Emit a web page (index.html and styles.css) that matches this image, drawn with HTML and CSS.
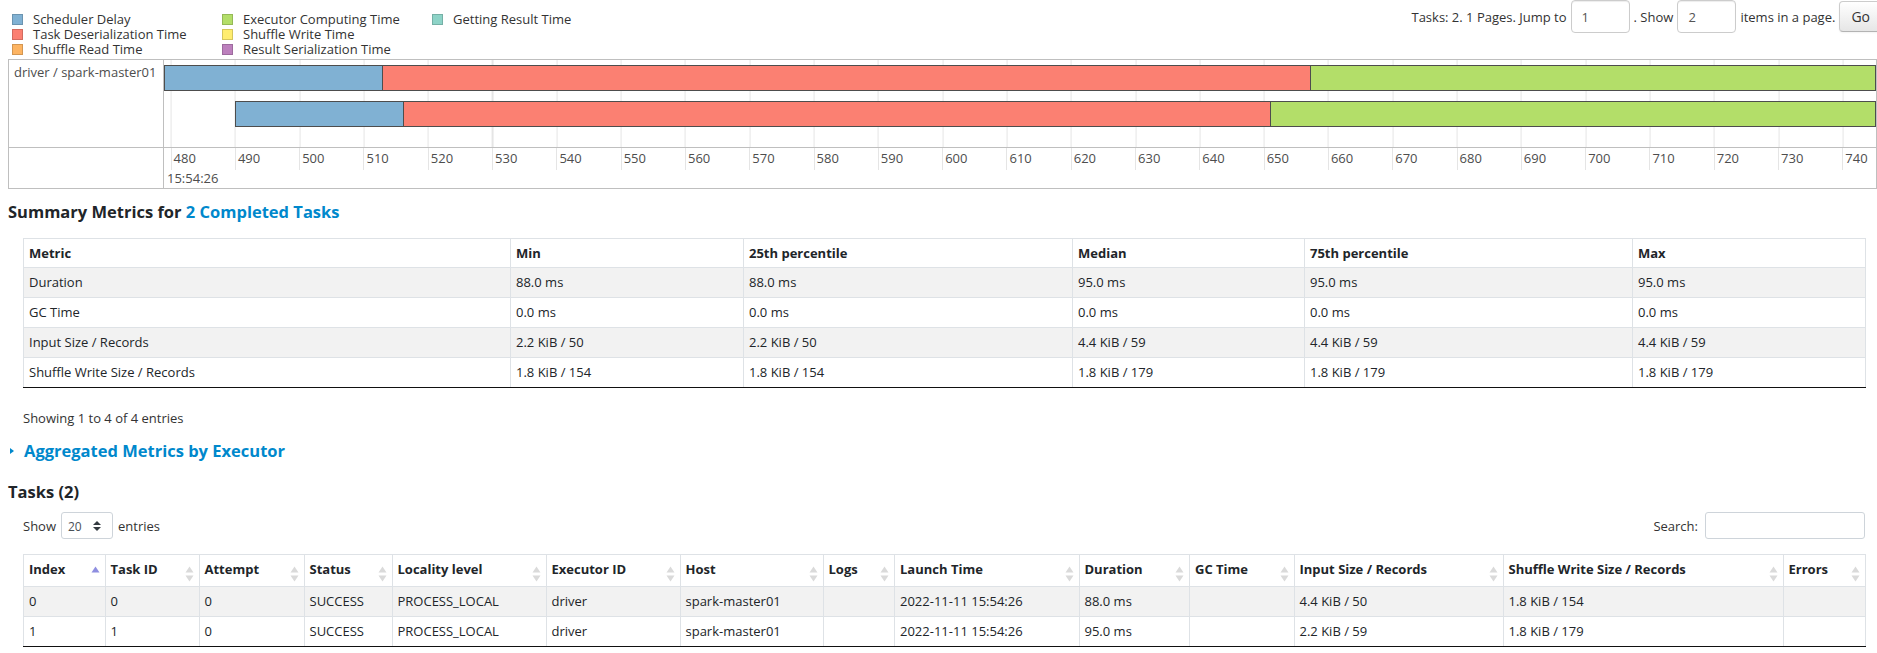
FILE: index.html
```html
<!DOCTYPE html>
<html>
<head>
<meta charset="utf-8">
<title>Stage</title>
<link rel="stylesheet" href="styles.css">
</head>
<body>
<div class="top">
  <div class="legend">
    <div class="lg"><span class="sw c-sched"></span>Scheduler Delay</div>
    <div class="lg"><span class="sw c-deser"></span>Task Deserialization Time</div>
    <div class="lg"><span class="sw c-sread"></span>Shuffle Read Time</div>
    <div class="lg"><span class="sw c-exec"></span>Executor Computing Time</div>
    <div class="lg"><span class="sw c-swrite"></span>Shuffle Write Time</div>
    <div class="lg"><span class="sw c-ser"></span>Result Serialization Time</div>
    <div class="lg"><span class="sw c-result"></span>Getting Result Time</div>
  </div>
  <form class="pager">
    <span>Tasks: 2. 1 Pages. Jump to</span>
    <input class="pg-input" type="text" value="1">
    <span>. Show</span>
    <input class="pg-input" type="text" value="2">
    <span>items in a page.</span>
    <button type="button" class="go">Go</button>
  </form>
</div>

<div class="timeline">
  <div class="tl-label">driver / spark-master01</div>
  <div class="tl-items">
    <div class="bar">
      <div class="seg c-sched" style="width:219px"></div>
      <div class="seg c-deser" style="width:929px"></div>
      <div class="seg c-exec grow"></div>
    </div>
    <div class="bar" style="margin-left:71px">
      <div class="seg c-sched" style="width:169px"></div>
      <div class="seg c-deser" style="width:868px"></div>
      <div class="seg c-exec grow"></div>
    </div>
  </div>
  <div class="tl-label-axis"></div>
  <div class="tl-axis">
    <div class="ticks">
      <div class="tick">480</div><div class="tick">490</div><div class="tick">500</div><div class="tick">510</div>
      <div class="tick">520</div><div class="tick">530</div><div class="tick">540</div><div class="tick">550</div>
      <div class="tick">560</div><div class="tick">570</div><div class="tick">580</div><div class="tick">590</div>
      <div class="tick">600</div><div class="tick">610</div><div class="tick">620</div><div class="tick">630</div>
      <div class="tick">640</div><div class="tick">650</div><div class="tick">660</div><div class="tick">670</div>
      <div class="tick">680</div><div class="tick">690</div><div class="tick">700</div><div class="tick">710</div>
      <div class="tick">720</div><div class="tick">730</div><div class="tick">740</div>
    </div>
    <div class="major">15:54:26</div>
  </div>
</div>

<h4 class="heading summary-head">Summary Metrics for <a class="link" href="#">2 Completed Tasks</a></h4>

<div class="section">
  <table class="tbl summary">
    <colgroup>
      <col style="width:487px"><col style="width:233px"><col style="width:329px">
      <col style="width:232px"><col style="width:328px"><col style="width:233px">
    </colgroup>
    <thead>
      <tr><th>Metric</th><th>Min</th><th>25th percentile</th><th>Median</th><th>75th percentile</th><th>Max</th></tr>
    </thead>
    <tbody>
      <tr class="odd"><td>Duration</td><td>88.0 ms</td><td>88.0 ms</td><td>95.0 ms</td><td>95.0 ms</td><td>95.0 ms</td></tr>
      <tr><td>GC Time</td><td>0.0 ms</td><td>0.0 ms</td><td>0.0 ms</td><td>0.0 ms</td><td>0.0 ms</td></tr>
      <tr class="odd"><td>Input Size / Records</td><td>2.2 KiB / 50</td><td>2.2 KiB / 50</td><td>4.4 KiB / 59</td><td>4.4 KiB / 59</td><td>4.4 KiB / 59</td></tr>
      <tr><td>Shuffle Write Size / Records</td><td>1.8 KiB / 154</td><td>1.8 KiB / 154</td><td>1.8 KiB / 179</td><td>1.8 KiB / 179</td><td>1.8 KiB / 179</td></tr>
    </tbody>
  </table>
  <div class="info">Showing 1 to 4 of 4 entries</div>
</div>

<h4 class="heading agg"><span class="arrow"></span><a class="link" href="#">Aggregated Metrics by Executor</a></h4>

<h4 class="heading tasks-head">Tasks (2)</h4>

<div class="section">
  <div class="dt-controls">
    <div class="dt-length">Show
      <div class="select"><span>20</span>
        <svg class="sel-arrow" width="8" height="10" viewBox="0 0 4 5"><path d="M2 0L0 2h4zm0 5L0 3h4z" fill="#343a40"/></svg>
      </div>
      entries</div>
    <div class="dt-search">Search: <input class="search" type="text"></div>
  </div>

  <table class="tbl tasks">
    <colgroup>
      <col style="width:81.5px"><col style="width:94px"><col style="width:105px"><col style="width:88px">
      <col style="width:154px"><col style="width:134px"><col style="width:143px"><col style="width:71.5px">
      <col style="width:184.5px"><col style="width:110.5px"><col style="width:104.5px"><col style="width:209px">
      <col style="width:280px"><col style="width:82px">
    </colgroup>
    <thead>
      <tr>
        <th><div class="th"><span>Index</span><svg class="sort" width="9" height="16" viewBox="0 0 9 16"><path d="M0.5 6.5L4.5 0.5L8.5 6.5Z" fill="#8e8ee0"/></svg></div></th>
        <th><div class="th"><span>Task ID</span><svg class="sort" width="9" height="16" viewBox="0 0 9 16"><path d="M0.5 6.5L4.5 0.5L8.5 6.5ZM0.5 9.5L8.5 9.5L4.5 15.5Z" fill="#dadada"/></svg></div></th>
        <th><div class="th"><span>Attempt</span><svg class="sort" width="9" height="16" viewBox="0 0 9 16"><path d="M0.5 6.5L4.5 0.5L8.5 6.5ZM0.5 9.5L8.5 9.5L4.5 15.5Z" fill="#dadada"/></svg></div></th>
        <th><div class="th"><span>Status</span><svg class="sort" width="9" height="16" viewBox="0 0 9 16"><path d="M0.5 6.5L4.5 0.5L8.5 6.5ZM0.5 9.5L8.5 9.5L4.5 15.5Z" fill="#dadada"/></svg></div></th>
        <th><div class="th"><span>Locality level</span><svg class="sort" width="9" height="16" viewBox="0 0 9 16"><path d="M0.5 6.5L4.5 0.5L8.5 6.5ZM0.5 9.5L8.5 9.5L4.5 15.5Z" fill="#dadada"/></svg></div></th>
        <th><div class="th"><span>Executor ID</span><svg class="sort" width="9" height="16" viewBox="0 0 9 16"><path d="M0.5 6.5L4.5 0.5L8.5 6.5ZM0.5 9.5L8.5 9.5L4.5 15.5Z" fill="#dadada"/></svg></div></th>
        <th><div class="th"><span>Host</span><svg class="sort" width="9" height="16" viewBox="0 0 9 16"><path d="M0.5 6.5L4.5 0.5L8.5 6.5ZM0.5 9.5L8.5 9.5L4.5 15.5Z" fill="#dadada"/></svg></div></th>
        <th><div class="th"><span>Logs</span><svg class="sort" width="9" height="16" viewBox="0 0 9 16"><path d="M0.5 6.5L4.5 0.5L8.5 6.5ZM0.5 9.5L8.5 9.5L4.5 15.5Z" fill="#dadada"/></svg></div></th>
        <th><div class="th"><span>Launch Time</span><svg class="sort" width="9" height="16" viewBox="0 0 9 16"><path d="M0.5 6.5L4.5 0.5L8.5 6.5ZM0.5 9.5L8.5 9.5L4.5 15.5Z" fill="#dadada"/></svg></div></th>
        <th><div class="th"><span>Duration</span><svg class="sort" width="9" height="16" viewBox="0 0 9 16"><path d="M0.5 6.5L4.5 0.5L8.5 6.5ZM0.5 9.5L8.5 9.5L4.5 15.5Z" fill="#dadada"/></svg></div></th>
        <th><div class="th"><span>GC Time</span><svg class="sort" width="9" height="16" viewBox="0 0 9 16"><path d="M0.5 6.5L4.5 0.5L8.5 6.5ZM0.5 9.5L8.5 9.5L4.5 15.5Z" fill="#dadada"/></svg></div></th>
        <th><div class="th"><span>Input Size / Records</span><svg class="sort" width="9" height="16" viewBox="0 0 9 16"><path d="M0.5 6.5L4.5 0.5L8.5 6.5ZM0.5 9.5L8.5 9.5L4.5 15.5Z" fill="#dadada"/></svg></div></th>
        <th><div class="th"><span>Shuffle Write Size / Records</span><svg class="sort" width="9" height="16" viewBox="0 0 9 16"><path d="M0.5 6.5L4.5 0.5L8.5 6.5ZM0.5 9.5L8.5 9.5L4.5 15.5Z" fill="#dadada"/></svg></div></th>
        <th><div class="th"><span>Errors</span><svg class="sort" width="9" height="16" viewBox="0 0 9 16"><path d="M0.5 6.5L4.5 0.5L8.5 6.5ZM0.5 9.5L8.5 9.5L4.5 15.5Z" fill="#dadada"/></svg></div></th>
      </tr>
    </thead>
    <tbody>
      <tr class="odd"><td>0</td><td>0</td><td>0</td><td>SUCCESS</td><td>PROCESS_LOCAL</td><td>driver</td><td>spark-master01</td><td></td><td>2022-11-11 15:54:26</td><td>88.0 ms</td><td></td><td>4.4 KiB / 50</td><td>1.8 KiB / 154</td><td></td></tr>
      <tr><td>1</td><td>1</td><td>0</td><td>SUCCESS</td><td>PROCESS_LOCAL</td><td>driver</td><td>spark-master01</td><td></td><td>2022-11-11 15:54:26</td><td>95.0 ms</td><td></td><td>2.2 KiB / 59</td><td>1.8 KiB / 179</td><td></td></tr>
    </tbody>
  </table>
</div>
</body>
</html>
```
FILE: styles.css
```css
* { box-sizing: border-box; }
html, body { margin: 0; padding: 0; overflow-x: hidden; }
body {
  font-family: "Open Sans", "Noto Sans", sans-serif;
  font-size: 13px;
  color: #212529;
  background: #fff;
}

/* ---------- top: legend + pager ---------- */
.top {
  display: flex;
  justify-content: space-between;
  align-items: flex-start;
  height: 59px;
}
.legend {
  display: grid;
  grid-template-rows: repeat(3, 15px);
  grid-auto-flow: column;
  grid-auto-columns: 210px;
  margin: 12px 0 0 12px;
  line-height: 15px;
  color: #333;
}
.lg { display: flex; align-items: center; white-space: nowrap; }
.sw { width: 11px; height: 11px; border: 1px solid; margin-right: 10px; flex: none; }

.c-sched  { background: #80b1d3; border-color: #6b94b0; }
.c-deser  { background: #fb8072; border-color: #d26b5f; }
.c-sread  { background: #fdb462; border-color: #d39651; }
.c-exec   { background: #b3de69; border-color: #95b957; }
.c-swrite { background: #ffed6f; border-color: #d5c65c; }
.c-ser    { background: #bc80bd; border-color: #9d6b9e; }
.c-result { background: #8dd3c7; border-color: #75b0a6; }

.pager {
  display: flex;
  align-items: center;
  gap: 4px;
  height: 33px;
  margin: 0 -5px 0 0;
  color: #333;
  white-space: nowrap;
}
.pg-input {
  width: 59px;
  height: 33px;
  border: 1px solid #ccc;
  border-radius: 4px;
  padding: 0 10px;
  font: inherit;
  font-size: 13px;
  color: #555;
  box-shadow: inset 0 1px 1px rgba(0,0,0,.075);
  outline: none;
}
.go {
  height: 31px;
  padding: 0 11px;
  font: inherit;
  font-size: 14px;
  color: #333;
  border: 1px solid #ccc;
  border-bottom-color: #b3b3b3;
  border-radius: 4px;
  background: linear-gradient(#fff, #e6e6e6);
  box-shadow: inset 0 1px 0 rgba(255,255,255,.2), 0 1px 2px rgba(0,0,0,.05);
}

/* ---------- timeline ---------- */
.timeline {
  margin-left: 8px;
  border: 1px solid #bfbfbf;
  display: grid;
  grid-template-columns: 155px 1fr;
  grid-template-rows: 88px 40px;
  color: #4d4d4d;
}
.tl-label {
  border-right: 1px solid #bfbfbf;
  border-bottom: 1px solid #bfbfbf;
  padding: 3px 5px;
  line-height: 18px;
  white-space: nowrap;
}
.tl-label-axis { border-right: 1px solid #bfbfbf; }
.tl-items {
  border-bottom: 1px solid #bfbfbf;
  overflow: hidden;
  padding-top: 5px;
  display: flex;
  flex-direction: column;
  gap: 10px;
  background-image: repeating-linear-gradient(to right, #e5e5e5 0 1px, transparent 1px 64.3px);
  background-position: 6.6px 0;
}
.bar { display: flex; height: 26px; }
.seg { border: 1px solid; flex: none; height: 26px; }
.seg + .seg { margin-left: -1px; }
.seg.grow { flex: 1; }

.tl-axis { overflow: hidden; }
.ticks { display: flex; padding-left: 6.6px; }
.tick {
  flex: none;
  width: 64.3px;
  height: 22px;
  border-left: 1px solid #e5e5e5;
  padding-left: 2px;
  line-height: 20px;
}
.major { padding-left: 3px; line-height: 20px; margin-top: -2px; }

/* ---------- headings ---------- */
.heading {
  margin: 0 0 0 8px;
  font-size: 16.5px;
  font-weight: 700;
  line-height: 24px;
  color: #212529;
}
.link { color: #0088cc; text-decoration: none; }
.summary-head { margin-top: 11px; }
.agg { margin-top: 11px; display: flex; align-items: center; }
.arrow {
  width: 0; height: 0;
  margin: 0 10px 0 2px;
  border-left: 4px solid #0088cc;
  border-top: 3.5px solid transparent;
  border-bottom: 3.5px solid transparent;
}
.tasks-head { margin-top: 17px; }

/* ---------- tables ---------- */
.section { margin: 0 12px 0 23px; }
.summary { margin-top: 14px; }
.tbl {
  width: 100%;
  table-layout: fixed;
  border-collapse: collapse;
}
.tbl th, .tbl td {
  border: 1px solid #dee2e6;
  padding: 4px 5px;
  text-align: left;
  vertical-align: top;
  white-space: nowrap;
  overflow: hidden;
}
.tbl th { font-weight: 700; line-height: 20px; }
.tbl td { line-height: 21px; }
.tbl tbody tr.odd td { background: #f2f2f2; }
.tbl tbody tr:last-child td { border-bottom-color: #111; }

.th { display: flex; justify-content: space-between; align-items: flex-start; }
.sort { flex: none; margin-top: 7px; }

.info { margin-top: 20px; line-height: 20px; color: #333; }

.dt-controls {
  display: flex;
  justify-content: space-between;
  align-items: center;
  margin-top: 8px;
  height: 27px;
  color: #333;
}
.dt-length, .dt-search { display: flex; align-items: center; gap: 5px; }
.select {
  display: flex;
  align-items: center;
  justify-content: space-between;
  width: 52px;
  height: 27px;
  border: 1px solid #ced4da;
  border-radius: 3px;
  padding: 2px 11px 0 6px;
  font-size: 12px;
  color: #495057;
}
.sel-arrow { margin-top: -2px; }
.search {
  width: 160px;
  height: 27px;
  margin-left: 2px;
  border: 1px solid #ced4da;
  border-radius: 3px;
  font: inherit;
  outline: none;
}
.tasks { margin-top: 15px; }
```
